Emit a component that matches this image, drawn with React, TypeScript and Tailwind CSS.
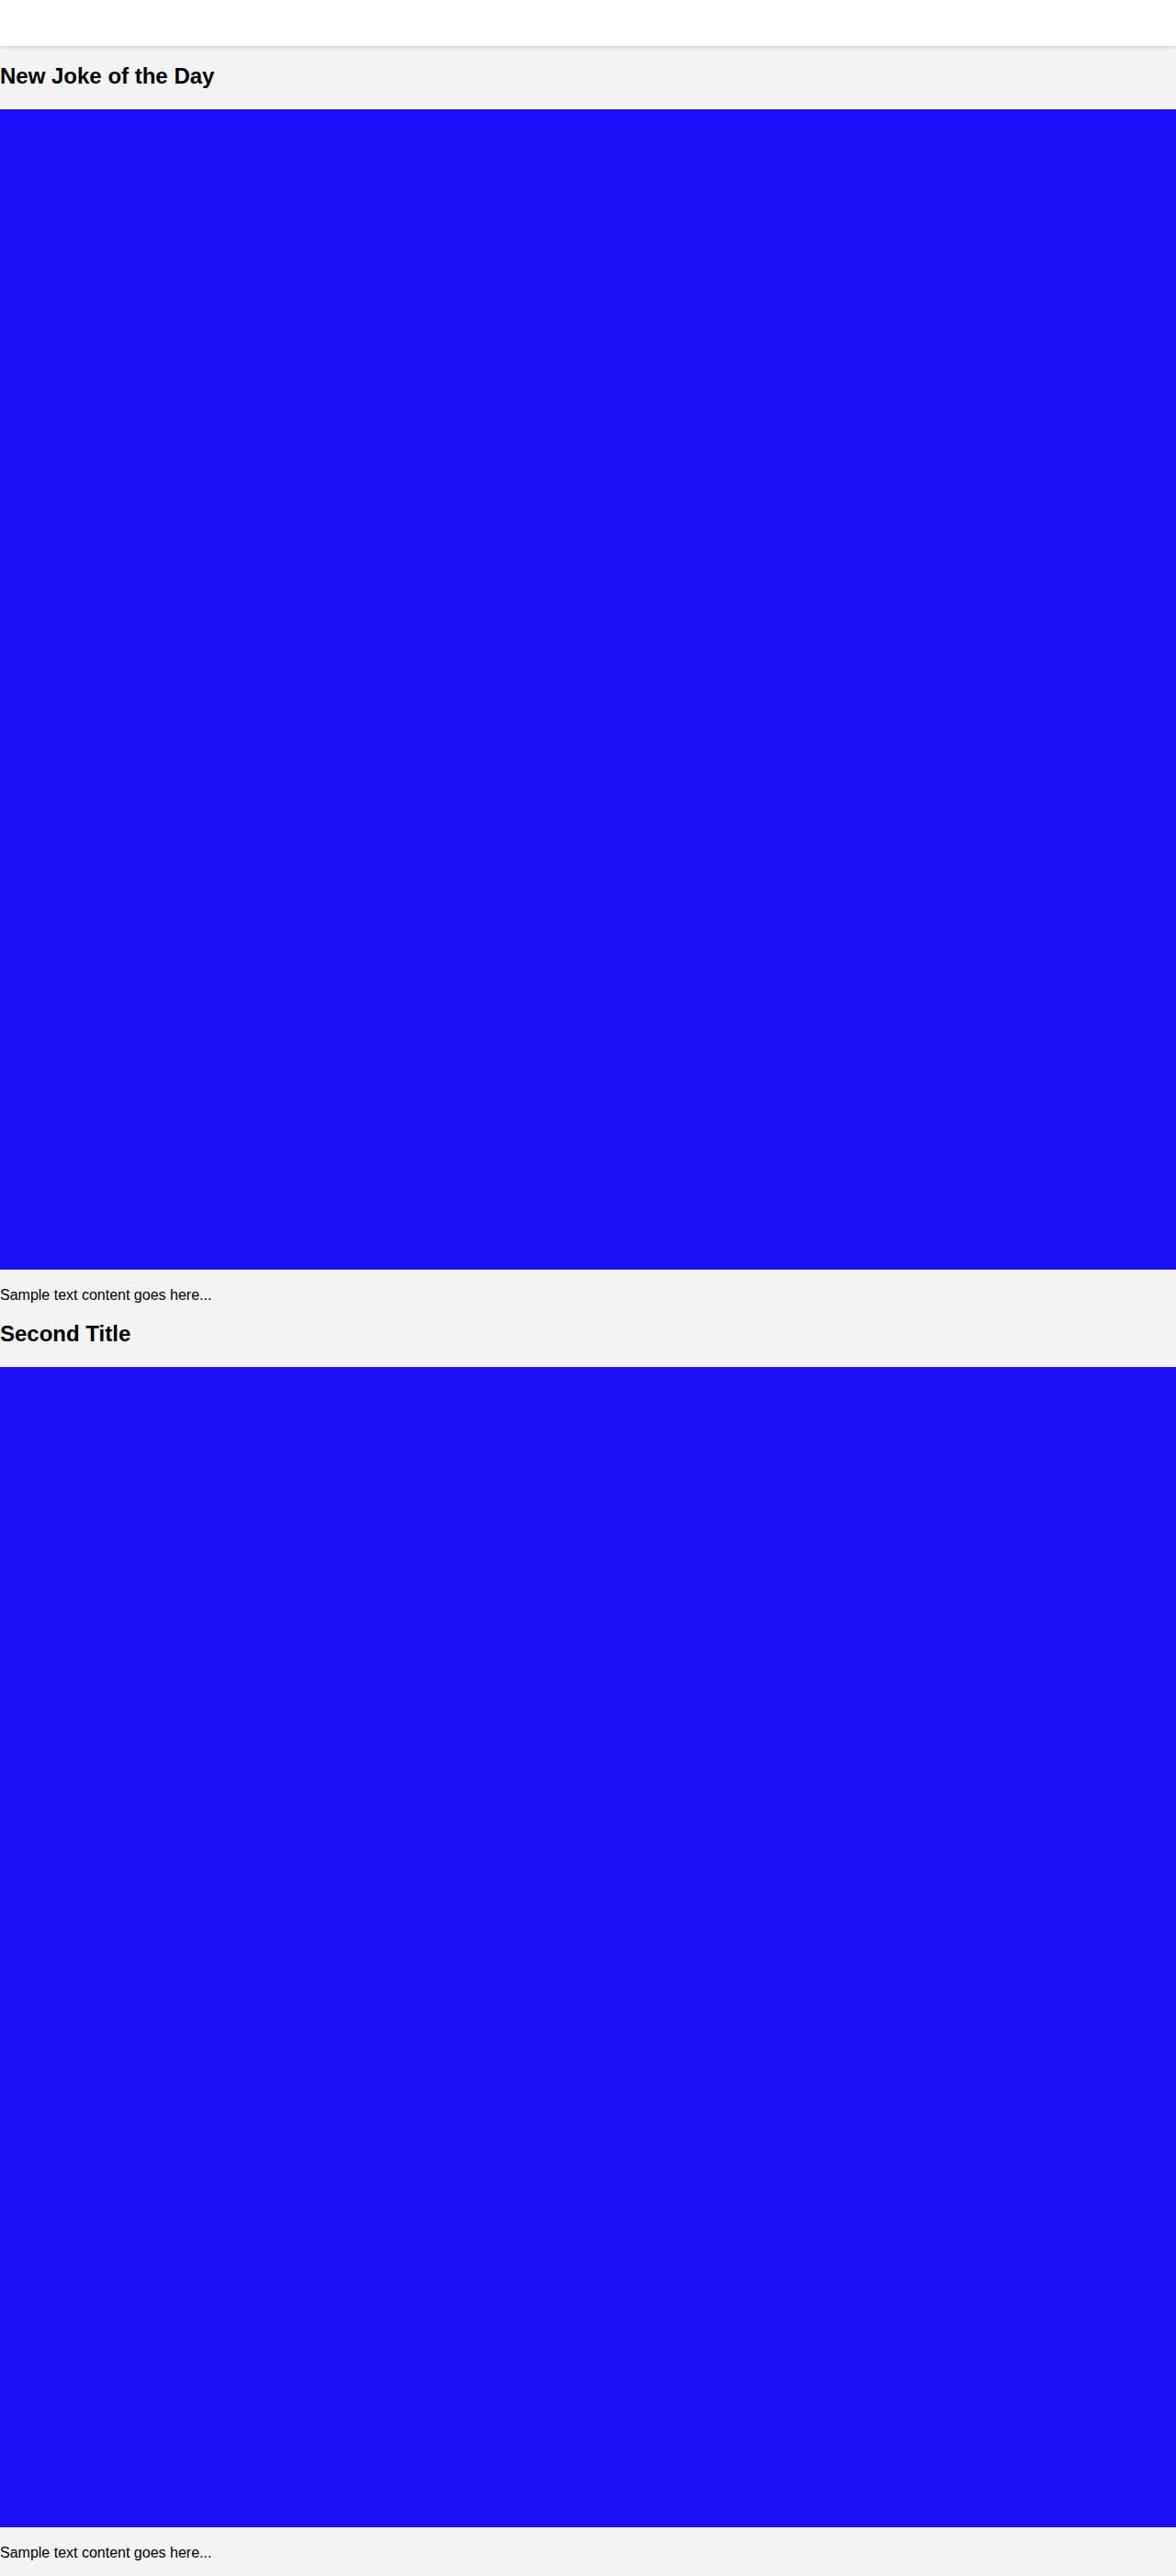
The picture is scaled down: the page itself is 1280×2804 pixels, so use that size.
export default function App() {
    return (
        <div className="min-h-screen bg-[#f4f4f4] text-black font-['Liberation_Sans',Arial,sans-serif]">
            {/* Top bar */}
            <header className="relative z-10 h-[50px] bg-white shadow-[0_2px_4px_rgba(0,0,0,0.12)]"></header>

            <main>
                <section>
                    <h2 className="mt-[19px] mb-[22px] text-[24px] font-bold leading-[normal]">New Joke of the Day</h2>
                    <div className="w-full h-[1263px] bg-[#1c0ff7]"></div>
                    <p className="my-[19px] text-[16px] leading-[normal]">Sample text content goes here...</p>
                </section>

                <section>
                    <h2 className="mt-[19px] mb-[22px] text-[24px] font-bold leading-[normal]">Second Title</h2>
                    <div className="w-full h-[1263px] bg-[#1c0ff7]"></div>
                    <p className="my-[19px] text-[16px] leading-[normal]">Sample text content goes here...</p>
                </section>
            </main>
        </div>
    );
}
